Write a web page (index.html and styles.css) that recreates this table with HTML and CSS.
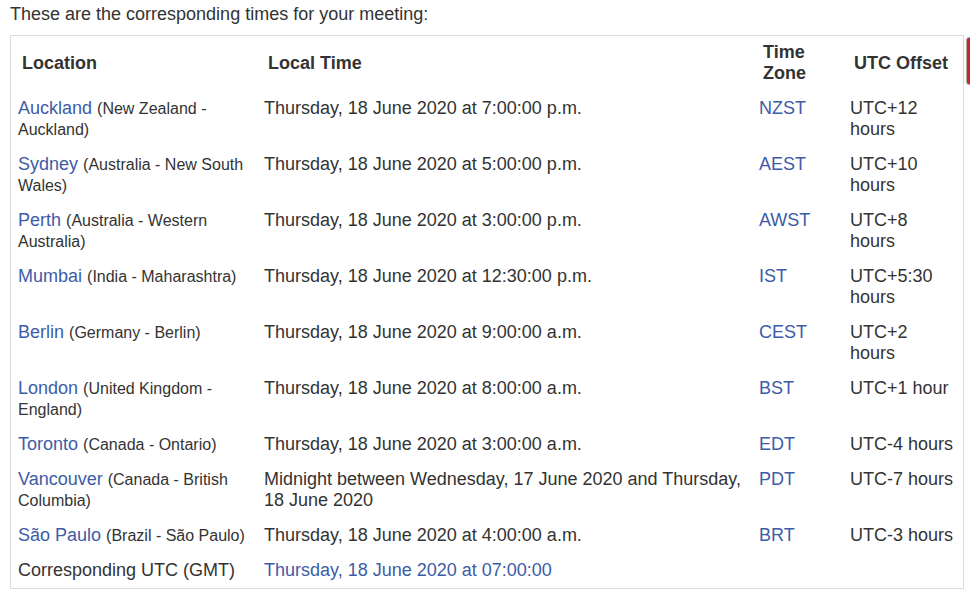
FILE: index.html
```html
<!DOCTYPE html>
<html>
<head>
<meta charset="utf-8">
<link rel="stylesheet" href="styles.css">
</head>
<body>
<p class="intro">These are the corresponding times for your meeting:</p>
<table class="times">
  <colgroup>
    <col class="c-loc"><col class="c-time"><col class="c-tz"><col class="c-off">
  </colgroup>
  <thead>
    <tr><th>Location</th><th>Local Time</th><th class="tz-head">Time Zone</th><th>UTC Offset</th></tr>
  </thead>
  <tbody>
    <tr><td><a href="#">Auckland</a> <span class="sub">(New Zealand - Auckland)</span></td><td>Thursday, 18 June 2020 at 7:00:00 p.m.</td><td><a href="#">NZST</a></td><td>UTC+12 hours</td></tr>
    <tr><td><a href="#">Sydney</a> <span class="sub">(Australia - New South Wales)</span></td><td>Thursday, 18 June 2020 at 5:00:00 p.m.</td><td><a href="#">AEST</a></td><td>UTC+10 hours</td></tr>
    <tr><td><a href="#">Perth</a> <span class="sub">(Australia - Western Australia)</span></td><td>Thursday, 18 June 2020 at 3:00:00 p.m.</td><td><a href="#">AWST</a></td><td>UTC+8 hours</td></tr>
    <tr><td><a href="#">Mumbai</a> <span class="sub">(India - Maharashtra)</span></td><td>Thursday, 18 June 2020 at 12:30:00 p.m.</td><td><a href="#">IST</a></td><td>UTC+5:30 hours</td></tr>
    <tr><td><a href="#">Berlin</a> <span class="sub">(Germany - Berlin)</span></td><td>Thursday, 18 June 2020 at 9:00:00 a.m.</td><td><a href="#">CEST</a></td><td>UTC+2 hours</td></tr>
    <tr><td><a href="#">London</a> <span class="sub">(United Kingdom - England)</span></td><td>Thursday, 18 June 2020 at 8:00:00 a.m.</td><td><a href="#">BST</a></td><td>UTC+1 hour</td></tr>
    <tr><td><a href="#">Toronto</a> <span class="sub">(Canada - Ontario)</span></td><td>Thursday, 18 June 2020 at 3:00:00 a.m.</td><td><a href="#">EDT</a></td><td>UTC-4 hours</td></tr>
    <tr><td><a href="#">Vancouver</a> <span class="sub">(Canada - British Columbia)</span></td><td>Midnight between Wednesday, 17 June 2020 and Thursday, 18 June 2020</td><td><a href="#">PDT</a></td><td>UTC-7 hours</td></tr>
    <tr><td><a href="#">São Paulo</a> <span class="sub">(Brazil - São Paulo)</span></td><td>Thursday, 18 June 2020 at 4:00:00 a.m.</td><td><a href="#">BRT</a></td><td>UTC-3 hours</td></tr>
    <tr><td>Corresponding UTC (GMT)</td><td colspan="3"><a href="#">Thursday, 18 June 2020 at 07:00:00</a></td></tr>
  </tbody>
</table>
<div class="side-tab"></div>
</body>
</html>
```
FILE: styles.css
```css
html, body {
  margin: 0;
  padding: 0;
  background: #fff;
}
body {
  padding: 0 10px;
  font-family: "Liberation Sans", Arial, Helvetica, sans-serif;
  font-size: 18px;
  line-height: 21px;
  color: #333;
  position: relative;
  width: 950px;
}
.intro {
  margin: 0;
  padding-top: 4px;
  height: 31px;
}
a {
  color: #3d5ca8;
  text-decoration: none;
}
.times {
  table-layout: fixed;
  border-collapse: separate;
  border-spacing: 0;
  border: 1px solid #dcdcdc;
  width: 954px;
}
.c-loc { width: 246px; }
.c-time { width: 495px; }
.c-tz { width: 91px; }
.c-off { width: 120px; }
.times th {
  text-align: left;
  font-weight: bold;
  padding: 6px 11px 7px;
  vertical-align: middle;
}
.times td {
  padding: 7px 7px;
  vertical-align: top;
}
.sub {
  font-size: 16px;
}
.side-tab {
  position: absolute;
  left: 966px;
  top: 37px;
  width: 20px;
  height: 46px;
  background: #c8262e;
  border: 1px solid #b0b0b0;
  border-radius: 3px;
}
```
